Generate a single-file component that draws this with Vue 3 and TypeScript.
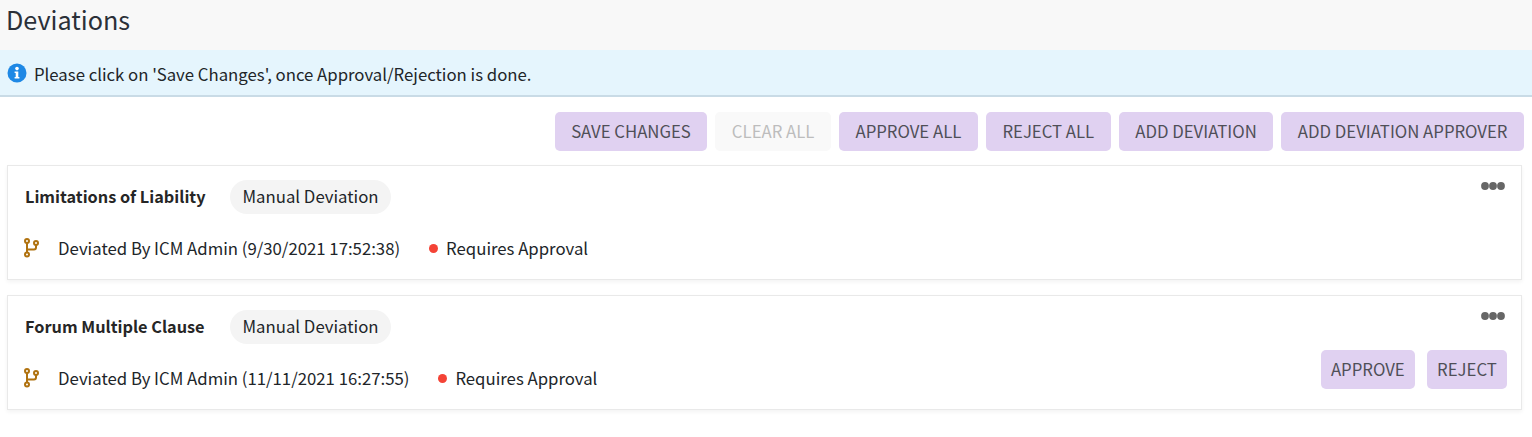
<script setup lang="ts">
interface Deviation {
  title: string
  deviatedBy: string
  canAct: boolean
}

const actions = ['SAVE CHANGES', 'CLEAR ALL', 'APPROVE ALL', 'REJECT ALL', 'ADD DEVIATION', 'ADD DEVIATION APPROVER']

const deviations: Deviation[] = [
  { title: 'Limitations of Liability', deviatedBy: 'Deviated By ICM Admin (9/30/2021 17:52:38)', canAct: false },
  { title: 'Forum Multiple Clause', deviatedBy: 'Deviated By ICM Admin (11/11/2021 16:27:55)', canAct: true },
]
</script>

<template>
  <div class="page">
    <div class="page-header">Deviations</div>

    <div class="notice">
      <svg class="notice-icon" width="20" height="20" viewBox="0 0 20 20">
        <circle cx="10" cy="10" r="9.5" fill="#1e88e5" />
        <circle cx="10" cy="5.6" r="1.8" fill="#fff" />
        <path d="M7.6 8.4h3.7v5.6h1.1v1.6H7.6V14h1.1v-4H7.6z" fill="#fff" />
      </svg>
      <span class="notice-text">Please click on 'Save Changes', once Approval/Rejection is done.</span>
    </div>

    <div class="toolbar">
      <button
        v-for="action in actions"
        :key="action"
        class="btn"
        :class="{ disabled: action === 'CLEAR ALL' }"
      >
        {{ action }}
      </button>
    </div>

    <div v-for="item in deviations" :key="item.title" class="card">
      <div class="card-top">
        <span class="card-title">{{ item.title }}</span>
        <span class="pill">Manual Deviation</span>
        <svg class="more" width="24" height="8" viewBox="0 0 24 8">
          <circle cx="4" cy="4" r="3.9" fill="#666" />
          <circle cx="12" cy="4" r="3.9" fill="#666" />
          <circle cx="20" cy="4" r="3.9" fill="#666" />
        </svg>
      </div>
      <div class="card-bottom">
        <div class="meta">
          <svg class="branch" width="16" height="20" viewBox="0 0 16 20" fill="none" stroke="#b0720f" stroke-width="2">
            <circle cx="3" cy="3" r="2" />
            <circle cx="3" cy="16.5" r="2" />
            <circle cx="12" cy="5" r="2" />
            <path d="M3 5v9.5M12 7v2.5a2 2 0 0 1-2 2H3" />
          </svg>
          <span class="deviated">{{ item.deviatedBy }}</span>
          <span class="status-dot"></span>
          <span>Requires Approval</span>
        </div>
        <div v-if="item.canAct" class="card-actions">
          <button class="btn small">APPROVE</button>
          <button class="btn small">REJECT</button>
        </div>
      </div>
    </div>
  </div>
</template>

<style scoped>
.page {
  font-family: "Noto Sans CJK SC", "Noto Sans", sans-serif;
  font-size: 16.75px;
  color: #212529;
  background: #fff;
  min-height: 437px;
}

.page-header {
  height: 50px;
  padding: 2px 6px 0;
  box-sizing: border-box;
  background: #f8f8f8;
  font-size: 25.2px;
  line-height: 34px;
  color: #2b3038;
}

.notice {
  display: flex;
  align-items: center;
  gap: 7px;
  height: 47px;
  padding: 0 7px;
  box-sizing: border-box;
  background: #e5f5fd;
  border-bottom: 2px solid #c9dbe6;
}

.notice-text {
  padding-top: 2px;
}

.toolbar {
  display: flex;
  justify-content: flex-end;
  gap: 8px;
  padding: 15px 8px 14px 0;
}

.btn {
  height: 39px;
  padding: 0 16.5px 2px;
  border: none;
  border-radius: 5px;
  background: #e0d1f1;
  font: inherit;
  color: #4f4f57;
}

.btn.disabled {
  background: #f9f9f9;
  color: #bdbdbd;
}

.btn.small {
  padding: 0 10.2px 2px;
}

.card {
  margin: 0 10px 15px 7px;
  padding: 14px 17px 20px;
  height: 115px;
  box-sizing: border-box;
  background: #fff;
  border: 1px solid #e9e9e9;
  box-shadow: 0 2px 4px rgba(0, 0, 0, 0.05);
}

.card-top {
  display: flex;
  align-items: center;
  height: 34px;
  margin-bottom: 6px;
}

.card-title {
  width: 205px;
  margin-top: -3px;
  font-size: 16.3px;
  font-weight: 700;
  color: #262626;
}

.pill {
  height: 34px;
  line-height: 32px;
  padding: 0 12.5px;
  border-radius: 17px;
  background: #f4f4f4;
}

.more {
  margin-left: auto;
  margin-top: -23px;
  margin-right: -1px;
}

.card-bottom {
  display: flex;
  justify-content: space-between;
  align-items: flex-end;
  height: 39px;
}

.meta {
  display: flex;
  align-items: center;
  height: 18px;
  padding-bottom: 2px;
  margin-left: -2px;
}

.branch {
  margin-left: 1px;
  margin-right: 18px;
  margin-top: -1px;
}

.status-dot {
  width: 9px;
  height: 9px;
  margin: 0 8.5px 0 28.5px;
  border-radius: 50%;
  background: #f44336;
}

.card-actions {
  display: flex;
  gap: 12px;
  margin-right: -3px;
}
</style>

<style>
html,
body {
  margin: 0;
  background: #fff;
}
</style>
